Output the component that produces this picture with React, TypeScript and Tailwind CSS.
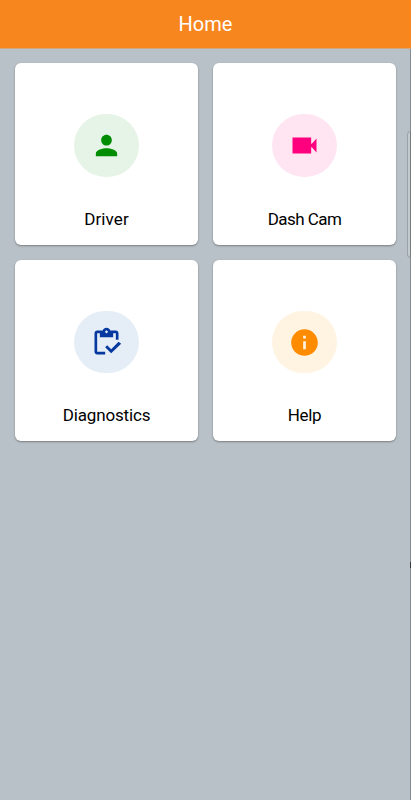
import React from 'react';

interface MenuItem {
  label: string;
  labelClass: string;
  circle: string;
  color: string;
  paths: string[];
}

const menuItems: MenuItem[] = [
  {
    label: 'Driver',
    labelClass: 'tracking-[0.1px]',
    circle: 'bg-[#e5f4e6]',
    color: 'text-[#008d00]',
    paths: ['M12 12c2.21 0 4-1.79 4-4s-1.79-4-4-4-4 1.79-4 4 1.79 4 4 4zm0 2c-2.67 0-8 1.34-8 4v2h16v-2c0-2.66-5.33-4-8-4z'],
  },
  {
    label: 'Dash Cam',
    labelClass: 'tracking-[-0.55px]',
    circle: 'bg-[#ffe5f2]',
    color: 'text-[#ff007f]',
    paths: ['M17 10.7V6H3v12h14v-4.7h.5l3.5 4v-10.6l-3.5 4z'],
  },
  {
    label: 'Diagnostics',
    labelClass: 'tracking-[-0.15px]',
    circle: 'bg-[#e5eef7]',
    color: 'text-[#0539a0]',
    paths: [
      'M5 5h2v3h10V5h2v5h2V5c0-1.1-.9-2-2-2h-4.18C14.4 1.84 13.3 1 12 1s-2.4.84-2.82 2H5c-1.1 0-2 .9-2 2v14c0 1.1.9 2 2 2h6v-2H5V5zm7-2c.55 0 1 .45 1 1s-.45 1-1 1-1-.45-1-1 .45-1 1-1z',
      'M21 11.5L15.51 17l-3.01-3-1.5 1.5 4.51 4.5L23 13z',
    ],
  },
  {
    label: 'Help',
    labelClass: 'tracking-[-0.3px]',
    circle: 'bg-[#fff3e2]',
    color: 'text-[#ff8c00]',
    paths: ['M12 2C6.48 2 2 6.48 2 12s4.48 10 10 10 10-4.48 10-10S17.52 2 12 2zm1 15h-2v-6h2v6zm0-8h-2V7h2v2z'],
  },
];

const MenuCard: React.FC<{ item: MenuItem }> = ({ item }) => (
  <button className="flex h-[181.5px] flex-col items-center rounded-[6px] bg-white pt-[51px] shadow-[0_1px_2px_rgba(0,0,0,0.35)]">
    <span className={`flex h-[62.5px] w-[65px] items-center justify-center rounded-full ${item.circle}`}>
      <svg viewBox="-0.375 -0.375 24.75 24.75" className={`h-[33px] w-[33px] fill-current ${item.color}`}>
        {item.paths.map((d) => (
          <path key={d} d={d} />
        ))}
      </svg>
    </span>
    <span className={`mt-[30px] text-[17px] leading-6 text-black ${item.labelClass}`}>{item.label}</span>
  </button>
);

const App: React.FC = () => {
  return (
    <div className="relative flex h-[800px] w-[411px] flex-col overflow-hidden bg-[#b8c1c7] font-['Roboto',sans-serif]">
      <header className="flex h-[49px] shrink-0 items-center justify-center border-b border-[#d3a67d] bg-[#f7861f] pb-px">
        <h1 className="text-[20px] leading-6 tracking-normal text-white">Home</h1>
      </header>

      <main className="grid grid-cols-2 gap-x-[15px] gap-y-[15px] px-[15px] pt-[14.4px]">
        {menuItems.map((item) => (
          <MenuCard key={item.label} item={item} />
        ))}
      </main>

      {/* Screen edge and side panel handle */}
      <div className="absolute bottom-0 right-0 top-[49px] w-px bg-[#858b8e]" />
      <div className="absolute right-0 top-[131px] h-[127px] w-[4px] rounded-l-[4px] border border-r-[#777c7f] border-[#9ba2a6] bg-[#c4cbcf]" />
      <div className="absolute right-0 top-[562px] h-[6px] w-px bg-[#353839]" />
    </div>
  );
};

export default App;
